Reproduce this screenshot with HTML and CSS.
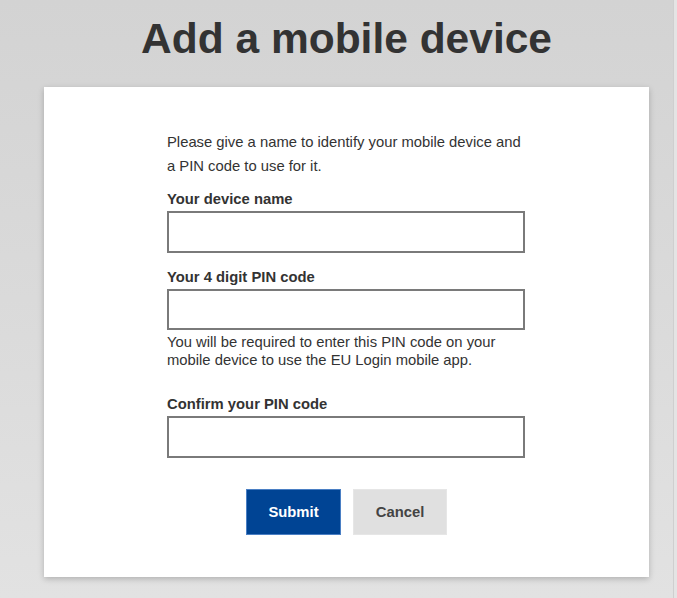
FILE: index.html
```html
<!DOCTYPE html>
<html lang="en">
<head>
<meta charset="utf-8">
<title>Add a mobile device</title>
<link rel="stylesheet" href="styles.css">
</head>
<body>
<div class="page">
  <main class="wrap">
    <h1 class="title">Add a mobile device</h1>
    <section class="card">
      <form class="form">
        <p class="intro">Please give a name to identify your mobile device and a PIN code to use for it.</p>
        <label class="label label-first" for="name">Your device name</label>
        <input class="field" id="name" type="text">
        <label class="label" for="pin">Your 4 digit PIN code</label>
        <input class="field" id="pin" type="password">
        <p class="help">You will be required to enter this PIN code on your mobile device to use the EU Login mobile app.</p>
        <label class="label label-confirm" for="pin2">Confirm your PIN code</label>
        <input class="field" id="pin2" type="password">
        <div class="actions">
          <button type="button" class="btn btn-primary">Submit</button>
          <button type="button" class="btn btn-secondary">Cancel</button>
        </div>
      </form>
    </section>
  </main>
</div>
</body>
</html>
```
FILE: styles.css
```css
html, body {
  margin: 0;
  padding: 0;
  height: 100%;
}
body {
  font-family: "Liberation Sans", Arial, sans-serif;
  background: linear-gradient(to bottom, #d3d3d3 0%, #dadada 50%, #e2e2e2 100%);
  color: #333;
}
.page {
  height: 598px;
  box-sizing: border-box;
  border-right: 3px solid #e4e4e4;
  box-shadow: inset -1px 0 0 #cfcfcf;
}
.wrap {
  width: 605px;
  margin-left: 44px;
  padding-top: 15px;
}
.title {
  margin: 0;
  font-size: 42.5px;
  line-height: 48px;
  font-weight: bold;
  color: #333;
  text-align: center;
}
.card {
  margin-top: 24px;
  background: #fff;
  box-shadow: 0 2px 6px rgba(0, 0, 0, 0.22);
  padding: 43px 0 40px 123px;
  height: 490px;
  box-sizing: border-box;
}
.form {
  width: 358px;
  display: flex;
  flex-direction: column;
}
.intro {
  margin: 0;
  font-size: 14.8px;
  line-height: 24px;
  color: #333;
}
.label {
  display: block;
  font-size: 14.8px;
  line-height: 18px;
  font-weight: bold;
  color: #333;
  margin-top: 15px;
  margin-bottom: 3px;
}
.label-first {
  margin-top: 12px;
}
.label-confirm {
  margin-top: 26px;
}
.field {
  display: block;
  box-sizing: border-box;
  width: 358px;
  height: 41.5px;
  margin: 0;
  border: 2px solid #7a7a7a;
  border-radius: 0;
  background: #fff;
  padding: 0 8px;
  font: inherit;
}
.help {
  margin: 3px 0 0;
  font-size: 14.8px;
  line-height: 18px;
  color: #333;
}
.actions {
  display: flex;
  justify-content: center;
  gap: 12px;
  margin-top: 31px;
  margin-left: -123px;
  width: 605px;
}
.btn {
  height: 46px;
  width: 95px;
  font-family: "Liberation Sans", Arial, sans-serif;
  font-size: 14.8px;
  font-weight: bold;
  border-radius: 0;
  cursor: pointer;
}
.btn-primary {
  background: #004494;
  color: #fff;
  border: 1px solid #4a7fc4;
}
.btn-secondary {
  width: 94px;
  background: #e0e0e0;
  color: #444;
  border: 1px solid #e6e6e6;
}
```
